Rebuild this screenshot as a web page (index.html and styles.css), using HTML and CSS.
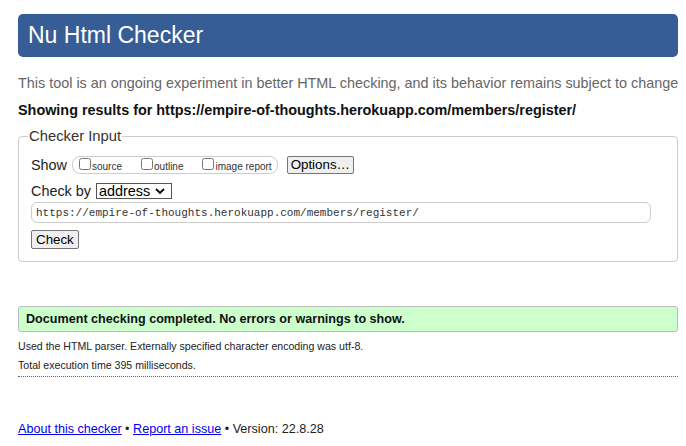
FILE: index.html
```html
<!DOCTYPE html>
<html>
<head>
<meta charset="utf-8">
<title>Nu Html Checker</title>
<link rel="stylesheet" href="styles.css">
</head>
<body>
<h1 class="title">Nu Html Checker</h1>
<p class="intro">This tool is an ongoing experiment in better HTML checking, and its behavior remains subject to change</p>
<p class="showing">Showing results for https://empire-of-thoughts.herokuapp.com/members/register/</p>
<form class="form">
  <fieldset class="checker">
    <legend class="legend">Checker Input</legend>
    <div class="row row-show">
      <span class="label">Show</span>
      <span class="pill">
        <label class="opt"><input type="checkbox" class="cb">source</label>
        <label class="opt"><input type="checkbox" class="cb">outline</label>
        <label class="opt"><input type="checkbox" class="cb">image report</label>
      </span>
      <button type="button" class="btn btn-options">Options…</button>
    </div>
    <div class="row row-by">
      <span class="label">Check by</span>
      <select class="sel"><option>address</option></select>
    </div>
    <div class="row row-url">
      <input class="url" type="text" value="https://empire-of-thoughts.herokuapp.com/members/register/">
    </div>
    <div class="row row-check">
      <button type="button" class="btn btn-check">Check</button>
    </div>
  </fieldset>
</form>
<p class="success">Document checking completed. No errors or warnings to show.</p>
<p class="details">Used the HTML parser. Externally specified character encoding was utf-8.</p>
<p class="details time">Total execution time 395 milliseconds.</p>
<p class="footer"><a href="#" class="link">About this checker</a> • <a href="#" class="link">Report an issue</a> • Version: 22.8.28</p>
</body>
</html>
```
FILE: styles.css
```css
html, body {
  margin: 0;
  padding: 0;
  background: #fff;
}
body {
  font-family: "Liberation Sans", Arial, sans-serif;
  font-size: 14.4px;
  color: #000;
  padding: 14px 8px 0 18px;
  width: 660px;
}
.title {
  margin: 0;
  height: 43px;
  background: #365d95;
  color: #fff;
  font-weight: normal;
  font-size: 23px;
  line-height: 43px;
  padding-left: 10px;
  border-radius: 5px;
}
.intro {
  margin: 17px 0 0 0;
  color: #666;
  font-size: 14.4px;
  line-height: 18px;
  white-space: nowrap;
}
.showing {
  margin: 9px 0 0 0;
  font-weight: bold;
  font-size: 14.4px;
  line-height: 18px;
  color: #111;
}
.form {
  margin: 0;
}
.checker {
  margin: 8px 0 0 0;
  padding: 0 12px 12px 12px;
  border: 1px solid #ccc;
  border-radius: 4px;
  min-width: 0;
}
.legend {
  padding: 0 1px;
  margin-left: -3px;
  font-size: 14.8px;
  line-height: 18px;
  color: #333;
}
.row {
  display: flex;
  align-items: center;
}
.row-show {
  margin-top: 11px;
  height: 18px;
}
.label {
  font-size: 14.4px;
  color: #222;
}
.pill {
  display: inline-flex;
  align-items: center;
  box-sizing: border-box;
  margin-left: 5px;
  height: 18px;
  border: 1px solid #ccc;
  border-radius: 8px;
  padding: 0 5px 0 6px;
  gap: 19px;
}
.opt {
  display: inline-flex;
  align-items: center;
  font-size: 10px;
  color: #333;
  position: relative;
  top: 1px;
}
.cb {
  margin: 0 1px 0 0;
  width: 12px;
  height: 12px;
  position: relative;
  top: -2px;
}
.btn {
  font-family: "Liberation Sans", Arial, sans-serif;
  font-size: 13.33px;
  background: #efefef;
  border: 1px solid #767676;
  border-radius: 2px;
  color: #000;
  padding: 0 4px;
  box-sizing: border-box;
  height: 19px;
  line-height: 17px;
}
.btn-options {
  margin-left: 9px;
  height: 18px;
  line-height: 16px;
  padding: 0 3px;
}
.row-by {
  margin-top: 9px;
  height: 16px;
}
.sel {
  -webkit-appearance: none;
  appearance: none;
  margin-left: 5px;
  width: 76px;
  height: 16px;
  box-sizing: border-box;
  border: 1px solid #555;
  border-radius: 0;
  font-family: "Liberation Sans", Arial, sans-serif;
  font-size: 14.4px;
  line-height: 14px;
  padding: 0 0 0 2px;
  color: #000;
  background: #fff url("data:image/svg+xml,%3Csvg xmlns='http://www.w3.org/2000/svg' width='10' height='6' viewBox='0 0 10 6'%3E%3Cpath d='M1 1l4 4 4-4' fill='none' stroke='%23000' stroke-width='1.8'/%3E%3C/svg%3E") no-repeat right 6px center;
}
.row-url {
  margin-top: 3px;
}
.url {
  width: 620px;
  box-sizing: border-box;
  height: 21px;
  border: 1px solid #ccc;
  border-radius: 6px;
  font-family: "Liberation Mono", "Courier New", monospace;
  font-size: 11px;
  color: #333;
  padding: 0 4px;
  margin: 0;
}
.row-check {
  margin-top: 7px;
}
.success {
  margin: 44px 0 0 0;
  background: #ccffcc;
  border: 1px solid #bbb;
  border-radius: 3px;
  box-sizing: border-box;
  height: 26px;
  line-height: 24px;
  padding-left: 7px;
  font-weight: bold;
  font-size: 12.6px;
  color: #111;
}
.details {
  margin: 8px 0 0 0;
  font-size: 10.6px;
  line-height: 13px;
  color: #222;
}
.time {
  margin-top: 6px;
  padding-bottom: 4px;
  border-bottom: 1px dotted #666;
}
.footer {
  margin: 45px 0 0 0;
  font-size: 12.6px;
  color: #222;
}
.link {
  color: #00e;
}
```
